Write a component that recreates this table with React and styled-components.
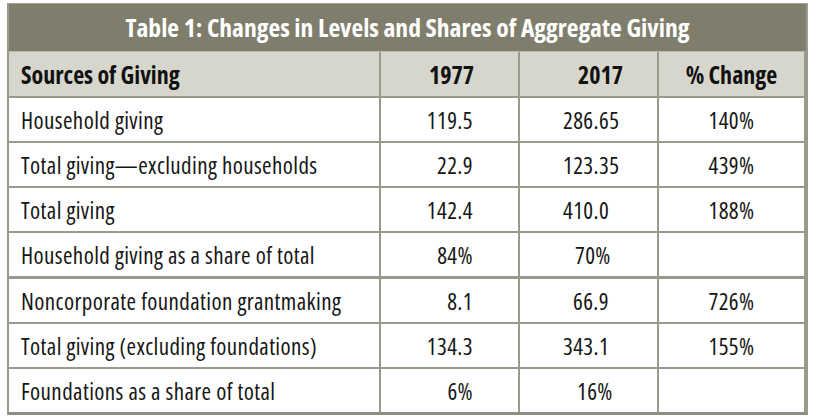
import React from "react";
import styled, { createGlobalStyle } from "styled-components";

const GlobalStyle = createGlobalStyle`
  body {
    margin: 0;
    background: #ffffff;
    font-family: "Open Sans", "Liberation Sans", Arial, sans-serif;
    font-stretch: 75%;
    color: #161616;
  }
`;

const LINE = "#9a9a8c";

const ROWS = [
  { label: "Household giving", a: "119.5", b: "286.65", c: "140%" },
  { label: "Total giving\u2014excluding households", a: "22.9", b: "123.35", c: "439%" },
  { label: "Total giving", a: "142.4", b: "410.0", c: "188%" },
  { label: "Household giving as a share of total", a: "84%", b: "70%", bPad: 55, c: "" },
  { label: "Noncorporate foundation grantmaking", a: "8.1", b: "66.9", bPad: 53, c: "726%", thick: true },
  { label: "Total giving (excluding foundations)", a: "134.3", b: "343.1", c: "155%" },
  { label: "Foundations as a share of total", a: "6%", b: "16%", bPad: 57, c: "" },
];

export default function App() {
  function renderRow(row, i) {
    return (
      <Row key={i} $thick={row.thick}>
        <Cell $pad={12}>{row.label}</Cell>
        <Cell $align="flex-end" $padRight={45}>
          {row.a}
        </Cell>
        <Cell $pad={row.bPad || 43}>{row.b}</Cell>
        <Cell $align="center">{row.c}</Cell>
      </Row>
    );
  }

  return (
    <Page>
      <GlobalStyle />
      <Frame>
        <Title>Table 1: Changes in Levels and Shares of Aggregate Giving</Title>
        <HeaderRow>
          <HeadCell $pad={12}>Sources of Giving</HeadCell>
          <HeadCell $align="flex-end" $padRight={44}>
            1977
          </HeadCell>
          <HeadCell $pad={58}>2017</HeadCell>
          <HeadCell $align="center">% Change</HeadCell>
        </HeaderRow>
        {ROWS.map(renderRow)}
      </Frame>
    </Page>
  );
}

const Page = styled.div`
  padding: 3px 0 0 7px;
`;

const Frame = styled.div`
  width: 797px;
  border: 2px solid ${LINE};
  border-top: 1px solid #a3a396;
  border-bottom-width: 3px;
  border-bottom-color: #8d8d80;
`;

const Title = styled.div`
  height: 47px;
  display: flex;
  align-items: center;
  justify-content: center;
  background: #7f7e6d;
  color: #ffffff;
  font-size: 25.6px;
  font-weight: 700;
`;

const Row = styled.div`
  display: grid;
  grid-template-columns: 370px 137px 137px 145px;
  column-gap: 2px;
  background: ${LINE};
  border-top: ${(p) => (p.$thick ? 3 : 2)}px solid ${LINE};
  height: 43px;
`;

const HeaderRow = styled(Row)`
  height: 44px;
  border-top: 1px solid #b8b8ac;
`;

const Cell = styled.div`
  display: flex;
  align-items: center;
  justify-content: ${(p) => p.$align || "flex-start"};
  padding-left: ${(p) => p.$pad || 0}px;
  padding-right: ${(p) => p.$padRight || 0}px;
  background: #ffffff;
  font-size: 23px;
  letter-spacing: 0.4px;
  white-space: nowrap;
`;

const HeadCell = styled(Cell)`
  background: #d6d6cd;
  font-size: 24px;
  font-weight: 700;
  letter-spacing: 0;
  color: #111111;
`;
